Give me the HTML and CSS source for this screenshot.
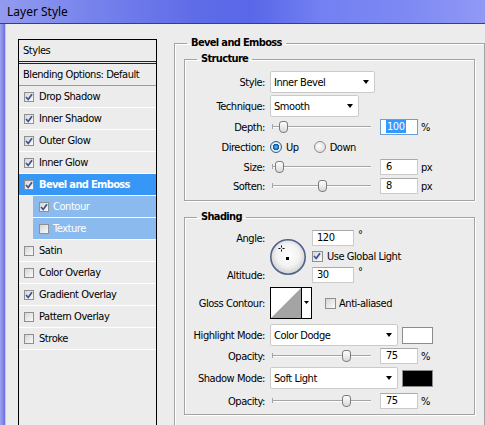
FILE: index.html
```html
<!doctype html>
<html>
<head>
    <meta charset="utf-8" />
    <title>Layer Style</title>
    <link rel="stylesheet" href="styles.css">
</head>
<body>
<div class="window">
    <div class="titlebar">Layer Style</div>
    <div class="frame">
        <div class="edge"></div>
        <div class="content">

            <div class="styles">
                <div class="item plain head">Styles</div>
                <div class="item plain blend">Blending Options: Default</div>
                <div class="item"><span class="cb on"><svg viewBox="0 0 8 8"><path d="M1 4 L3.2 6.5 L7 1.2"/></svg></span>Drop Shadow</div>
                <div class="item"><span class="cb on"><svg viewBox="0 0 8 8"><path d="M1 4 L3.2 6.5 L7 1.2"/></svg></span>Inner Shadow</div>
                <div class="item"><span class="cb on"><svg viewBox="0 0 8 8"><path d="M1 4 L3.2 6.5 L7 1.2"/></svg></span>Outer Glow</div>
                <div class="item"><span class="cb on"><svg viewBox="0 0 8 8"><path d="M1 4 L3.2 6.5 L7 1.2"/></svg></span>Inner Glow</div>
                <div class="item sel"><span class="cb on"><svg viewBox="0 0 8 8"><path d="M1 4 L3.2 6.5 L7 1.2"/></svg></span>Bevel and Emboss</div>
                <div class="item sub"><span class="cb on"><svg viewBox="0 0 8 8"><path d="M1 4 L3.2 6.5 L7 1.2"/></svg></span>Contour</div>
                <div class="item sub"><span class="cb"></span>Texture</div>
                <div class="item"><span class="cb"></span>Satin</div>
                <div class="item"><span class="cb"></span>Color Overlay</div>
                <div class="item"><span class="cb on"><svg viewBox="0 0 8 8"><path d="M1 4 L3.2 6.5 L7 1.2"/></svg></span>Gradient Overlay</div>
                <div class="item"><span class="cb"></span>Pattern Overlay</div>
                <div class="item"><span class="cb"></span>Stroke</div>
            </div>

            <fieldset class="group outer">
                <legend>Bevel and Emboss</legend>

                <fieldset class="group structure">
                    <legend>Structure</legend>

                    <div class="row tall mt5">
                        <span class="lbl">Style:</span>
                        <div class="select w-style">Inner Bevel</div>
                    </div>
                    <div class="row tall mt2">
                        <span class="lbl">Technique:</span>
                        <div class="select w-tech">Smooth</div>
                    </div>
                    <div class="row mt2">
                        <span class="lbl">Depth:</span>
                        <div class="slider"><span class="thumb" style="left:7px"></span></div>
                        <div class="field focus"><span class="hl">100</span></div>
                        <span class="unit">%</span>
                    </div>
                    <div class="row short mt5">
                        <span class="lbl">Direction:</span>
                        <span class="radio on"></span><span class="opt">Up</span>
                        <span class="radio"></span><span class="opt">Down</span>
                    </div>
                    <div class="row mt5">
                        <span class="lbl">Size:</span>
                        <div class="slider"><span class="thumb" style="left:3px"></span></div>
                        <div class="field">6</div>
                        <span class="unit">px</span>
                    </div>
                    <div class="row mt3">
                        <span class="lbl">Soften:</span>
                        <div class="slider"><span class="thumb" style="left:46px"></span></div>
                        <div class="field">8</div>
                        <span class="unit">px</span>
                    </div>
                </fieldset>

                <fieldset class="group shading">
                    <legend>Shading</legend>

                    <div class="angle">
                        <span class="lbl a-lbl">Angle:</span>
                        <svg class="dial" width="38" height="38" viewBox="0 0 38 38">
                            <defs>
                                <radialGradient id="dialfill" cx="50%" cy="45%" r="55%">
                                    <stop offset="0" stop-color="#ffffff"/>
                                    <stop offset="0.6" stop-color="#f2f2f2"/>
                                    <stop offset="1" stop-color="#cfcfcf"/>
                                </radialGradient>
                            </defs>
                            <circle cx="19" cy="19" r="17.2" fill="url(#dialfill)" stroke="#52628a" stroke-width="1.6"/>
                            <path d="M9.5 10.5 H11.5 M13.5 10.5 H15.5 M12.5 7.5 V9.5 M12.5 11.5 V13.5" stroke="#000" stroke-width="1"/>
                            <rect x="17" y="19" width="3" height="3" fill="#000"/>
                        </svg>
                        <div class="a-val"><div class="field w-angle">120</div><span class="deg">°</span></div>
                        <div class="a-glob"><span class="cb on"><svg viewBox="0 0 8 8"><path d="M1 4 L3.2 6.5 L7 1.2"/></svg></span>Use Global Light</div>
                        <span class="lbl b-lbl">Altitude:</span>
                        <div class="b-val"><div class="field w-angle">30</div><span class="deg">°</span></div>
                    </div>

                    <div class="row gloss mt4">
                        <span class="lbl">Gloss Contour:</span>
                        <svg class="contour" width="42" height="32" viewBox="0 0 42 32">
                            <rect x="0.5" y="0.5" width="41" height="31" fill="#fff" stroke="#000"/>
                            <polygon points="1,31 31,1 31,31" fill="#a4a4a4"/>
                            <line x1="31.5" y1="0" x2="31.5" y2="32" stroke="#000"/>
                            <polygon points="34,14 39,14 36.5,17" fill="#000"/>
                        </svg>
                        <span class="cb check-aa"></span><span>Anti-aliased</span>
                    </div>

                    <div class="row tall mt5">
                        <span class="lbl">Highlight Mode:</span>
                        <div class="select w-mode">Color Dodge</div>
                        <span class="swatch"></span>
                    </div>
                    <div class="row mt2">
                        <span class="lbl">Opacity:</span>
                        <div class="slider"><span class="thumb" style="left:70px"></span></div>
                        <div class="field">75</div>
                        <span class="unit">%</span>
                    </div>
                    <div class="row tall mt3">
                        <span class="lbl">Shadow Mode:</span>
                        <div class="select w-mode">Soft Light</div>
                        <span class="swatch black"></span>
                    </div>
                    <div class="row mt4">
                        <span class="lbl">Opacity:</span>
                        <div class="slider"><span class="thumb" style="left:70px"></span></div>
                        <div class="field">75</div>
                        <span class="unit">%</span>
                    </div>
                </fieldset>
            </fieldset>

        </div>
    </div>
</div>
</body>
</html>
```

FILE: styles.css
```css
body{
    margin:0;
    font-family:"DejaVu Sans Condensed","DejaVu Sans",sans-serif;
    font-size:11px;
    letter-spacing:-0.45px;
    color:#000;
}
.window{
    width:485px;
    height:425px;
    overflow:hidden;
    background:#ececec;
}
.titlebar{
    height:23px;
    line-height:23px;
    padding-left:7px;
    border-bottom:1px solid #3a3f78;
    background:linear-gradient(90deg,#939bef 0,#7884ec 18%,#5f6ce7 40%,#5a67e8 52%,#7280f1 66%,#7e89f3 84%,#9199f5 100%);
    font-family:"Noto Sans","Open Sans",sans-serif;
    font-size:12px;
    letter-spacing:0;
}
.frame{
    display:flex;
    height:401px;
    overflow:hidden;
}
.edge{
    width:5px;
    flex:none;
    background:linear-gradient(90deg,#9ea4ef,#6c71e3);
    border-right:1px solid #c4c6e4;
}
.content{
    flex:1;
    display:flex;
    align-items:flex-start;
    min-width:0;
}

/* styles list */
.styles{
    width:137px;
    height:400px;
    flex:none;
    margin:15px 0 0 12px;
    border:1px solid #000;
    border-bottom:0;
}
.item{
    height:21px;
    border-bottom:1px solid #fff;
    display:flex;
    align-items:center;
    padding-left:5px;
    white-space:nowrap;
}
.item.plain{
    padding-left:4px;
}
.item.head{
    border-bottom:3px double #222;
}
.item.blend{
    border-bottom-color:#9c9c9c;
}
.item.sel{
    background:#3797f7;
    color:#fff;
    font-weight:bold;
    letter-spacing:-0.65px;
}
.item.sub{
    margin-left:14px;
    padding-left:6px;
    background:#8bbbee;
    color:#fff;
}
.cb{
    width:8px;
    height:8px;
    flex:none;
    display:flex;
    margin-right:5px;
    border:1px solid #8e8f8f;
    background:linear-gradient(135deg,#d6d6d6,#fbfbfb);
}
.item.sub .cb{
    margin-right:4px;
}
.cb svg{
    width:8px;
    height:8px;
}
.cb path{
    fill:none;
    stroke:#3d4f96;
    stroke-width:1.7;
}

/* group boxes */
.group{
    margin:0;
    padding:0;
    min-width:0;
    border:1px solid #a3a3a3;
    box-shadow:inset 1px 1px 0 #fff,1px 1px 0 #fff;
}
.group legend{
    margin-left:12px;
    padding:0 4px;
    font-weight:bold;
    line-height:14px;
    letter-spacing:-0.65px;
}
.outer{
    width:311px;
    height:400px;
    flex:none;
    box-sizing:border-box;
    margin:12px 0 0 17px;
    padding:2px 9px 0;
}
.outer > legend{
    margin-left:3px;
}
.structure{
    padding-bottom:6px;
}
.shading{
    margin-top:9px;
    padding-bottom:5px;
}

/* rows */
.row{
    display:flex;
    align-items:center;
    height:16px;
    white-space:nowrap;
}
.row.tall{ height:22px; }
.row.short{ height:14px; }
.row.gloss{ height:32px; }
.mt2{ margin-top:2px; }
.mt3{ margin-top:3px; }
.mt4{ margin-top:4px; }
.mt5{ margin-top:5px; }
.lbl{
    width:80px;
    flex:none;
    margin-right:5px;
    text-align:right;
}

.select{
    height:22px;
    box-sizing:border-box;
    display:flex;
    align-items:center;
    justify-content:space-between;
    padding:0 5px 0 3px;
    border:1px solid #cacaca;
    border-radius:2px;
    background:#fff;
}
.select:after{
    content:"";
    border-left:3.5px solid transparent;
    border-right:3.5px solid transparent;
    border-top:4px solid #000;
}
.w-style{ width:105px; }
.w-tech{ width:89px; }
.w-mode{ width:128px; }

.field{
    width:38px;
    height:16px;
    box-sizing:border-box;
    flex:none;
    padding-left:5px;
    line-height:14px;
    border:1px solid #cbcbcb;
    border-top-color:#a9a9a9;
    background:#fff;
}
.field.focus{
    border-color:#6aa0d6;
    padding-left:5px;
}
.hl{
    background:#3399ff;
    color:#fff;
    padding:0 1px;
}
.w-angle{
    width:42px;
    padding-left:4px;
}
.unit{
    margin-left:3px;
}
.deg{
    align-self:flex-start;
    margin-left:4px;
    line-height:10px;
}

.slider{
    position:relative;
    width:99px;
    height:12px;
    flex:none;
    margin:0 9px 0 2px;
}
.slider:before{
    content:"";
    position:absolute;
    left:0;
    right:0;
    top:5px;
    height:1px;
    background:#a5a5a5;
    border-bottom:1px solid #fff;
}
.slider:after{
    content:"";
    position:absolute;
    left:0;
    top:3px;
    width:1px;
    height:5px;
    background:#a5a5a5;
}
.thumb{
    position:absolute;
    top:0;
    width:9px;
    height:12px;
    box-sizing:border-box;
    border:1px solid #7b7b7b;
    border-radius:3px 3px 4px 4px;
    background:linear-gradient(#fdfdfd,#d9d9d9);
}

.radio{
    width:12px;
    height:12px;
    flex:none;
    box-sizing:border-box;
    border-radius:50%;
    border:1px solid #8c8c8c;
    background:radial-gradient(circle at 40% 40%,#fff,#d2d2d2);
}
.radio.on{
    border-color:#2c5e8a;
    background:radial-gradient(circle,#67c6ff 0,#1b73c8 30%,#13508f 42%,#e9eef3 50%,#c4d0da 100%);
}
.opt{
    margin:0 15px 0 4px;
}
.opt:last-child{
    margin-right:0;
}

/* angle block */
.angle{
    display:grid;
    grid-template-columns:80px 47px auto;
    grid-template-rows:16px 13px 16px;
    row-gap:4px;
    margin-top:6px;
}
.a-lbl{ grid-row:1; grid-column:1; align-self:center; }
.b-lbl{ grid-row:3; grid-column:1; align-self:center; }
.dial{
    grid-row:1 / 4;
    grid-column:2;
    align-self:center;
    margin-left:4px;
}
.a-val,.b-val{
    grid-column:3;
    display:flex;
}
.a-val{ grid-row:1; }
.b-val{ grid-row:3; }
.a-glob{
    grid-row:2;
    grid-column:3;
    display:flex;
    align-items:center;
}
.a-glob .cb{
    width:9px;
    height:9px;
    margin-right:4px;
}

.contour{
    flex:none;
}
.check-aa{
    width:9px;
    height:9px;
    margin:0 3px 0 13px;
}

.swatch{
    width:31px;
    height:17px;
    box-sizing:border-box;
    flex:none;
    margin-left:4px;
    border:1px solid #8c8c8c;
    background:#fff;
}
.swatch.black{
    background:#000;
}
```
